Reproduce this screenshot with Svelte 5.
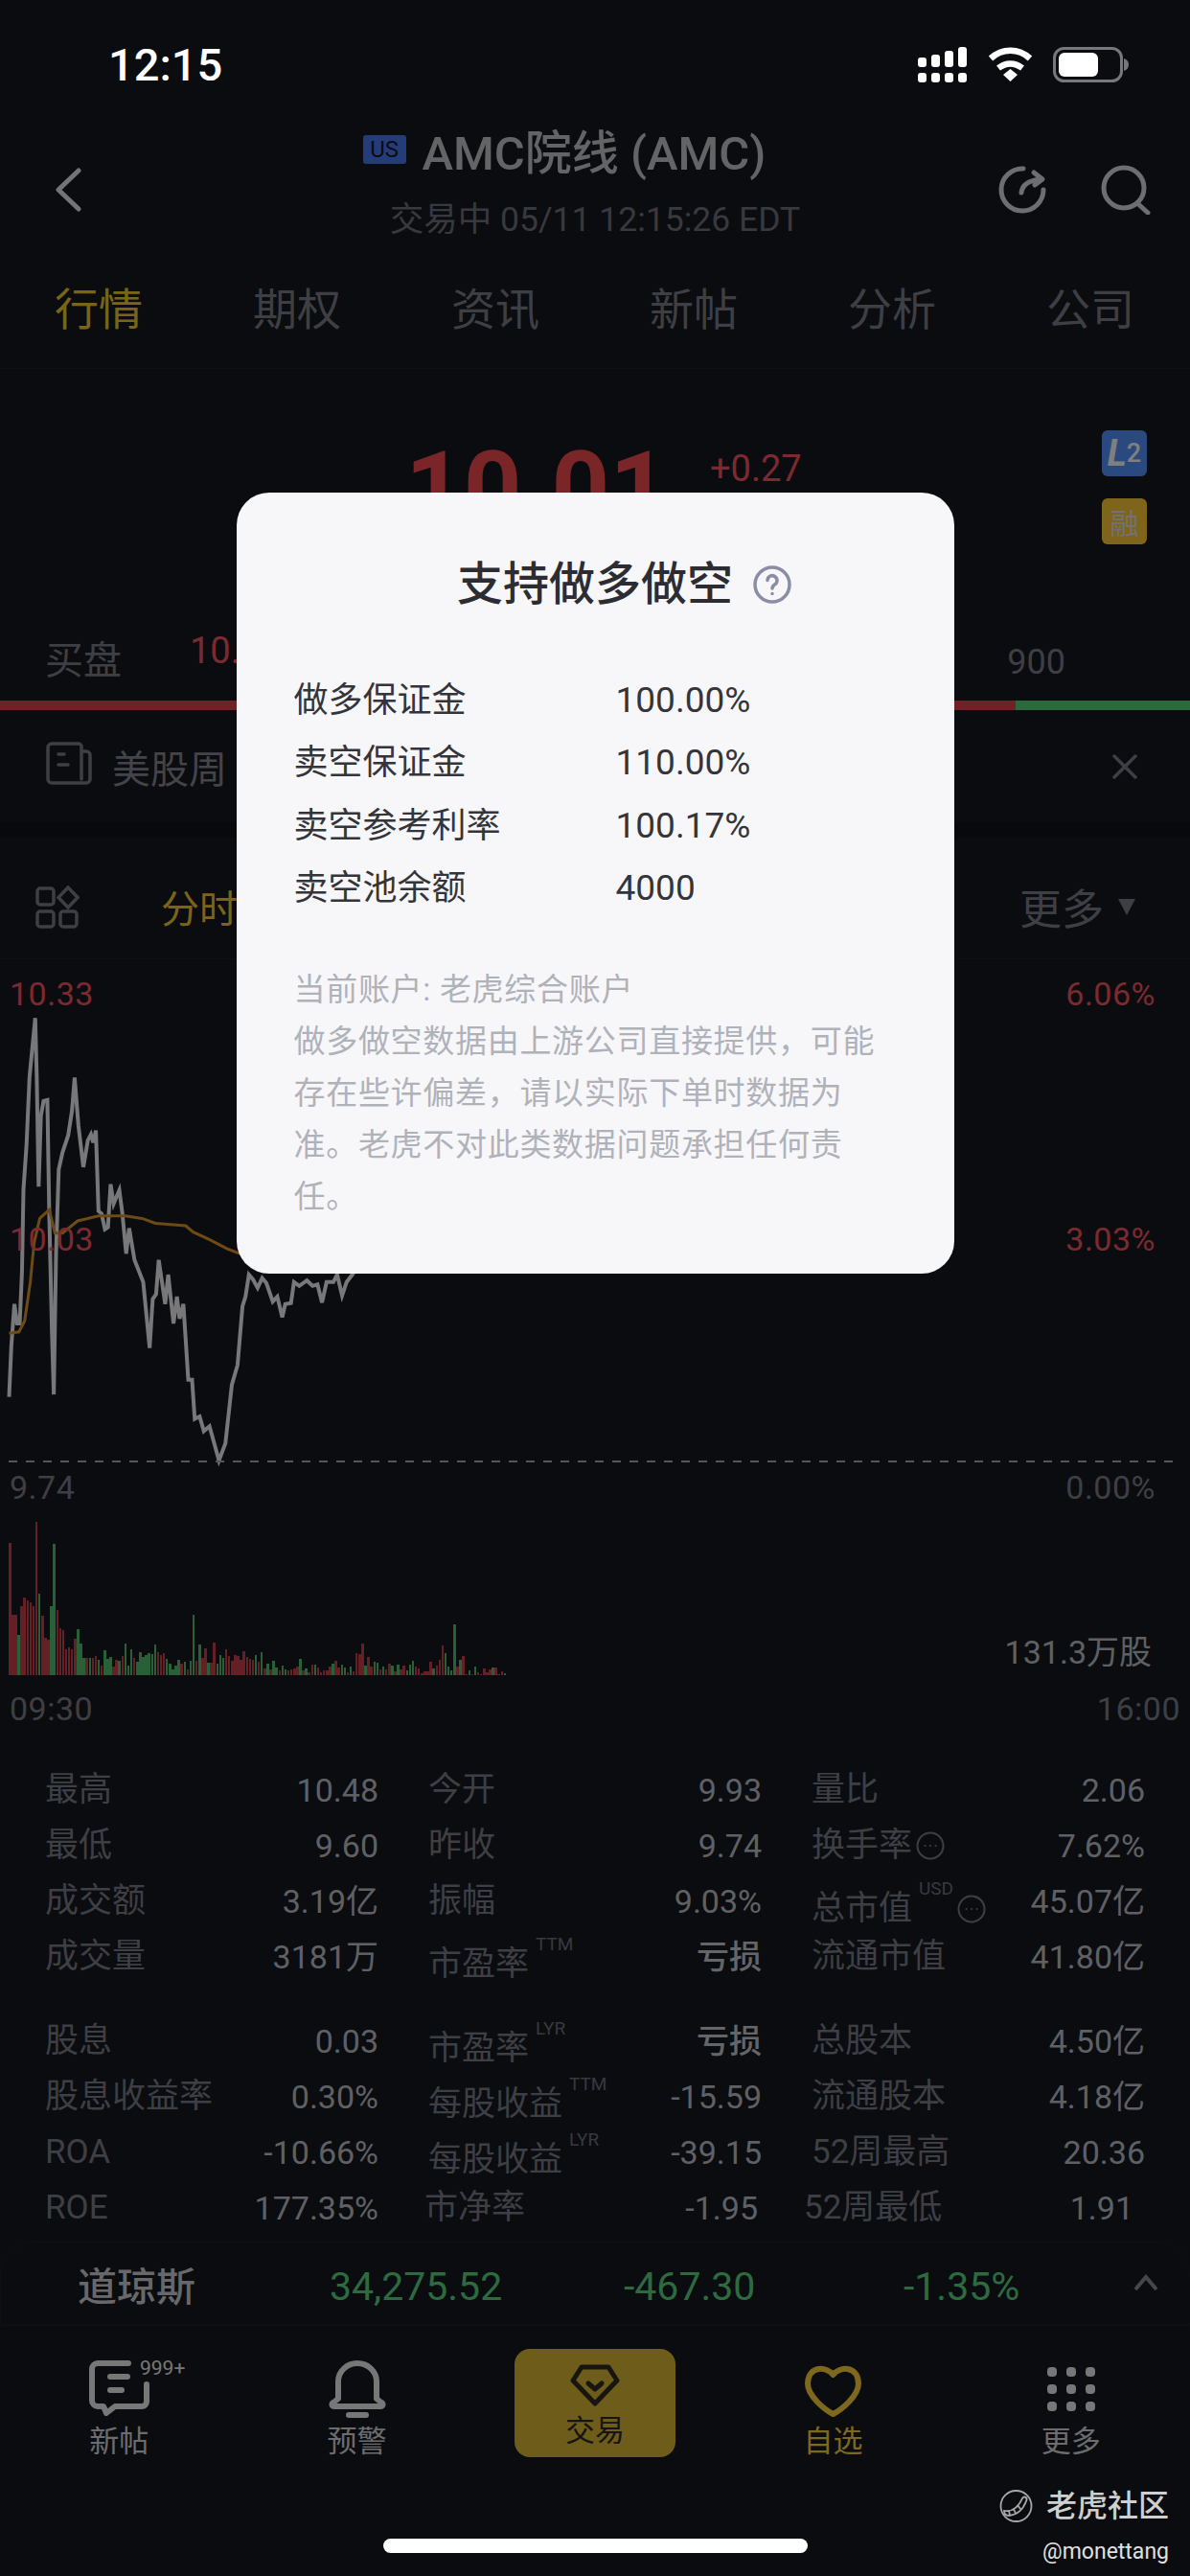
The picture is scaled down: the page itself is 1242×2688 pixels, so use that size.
<script>
  const tabs = ['行情', '期权', '资讯', '新帖', '分析', '公司'];

  // label, sup, info icon, value
  const statsTop = [
    ['最高', '', false, '10.48'], ['今开', '', false, '9.93'], ['量比', '', false, '2.06'],
    ['最低', '', false, '9.60'], ['昨收', '', false, '9.74'], ['换手率', '', true, '7.62%'],
    ['成交额', '', false, '3.19亿'], ['振幅', '', false, '9.03%'], ['总市值', 'USD', true, '45.07亿'],
    ['成交量', '', false, '3181万'], ['市盈率', 'TTM', false, '亏损'], ['流通市值', '', false, '41.80亿'],
  ];
  const statsBottom = [
    ['股息', '', false, '0.03'], ['市盈率', 'LYR', false, '亏损'], ['总股本', '', false, '4.50亿'],
    ['股息收益率', '', false, '0.30%'], ['每股收益', 'TTM', false, '-15.59'], ['流通股本', '', false, '4.18亿'],
    ['ROA', '', false, '-10.66%'], ['每股收益', 'LYR', false, '-39.15'], ['52周最高', '', false, '20.36'],
    ['ROE', '', false, '177.35%'], ['市净率', '', false, '-1.95'], ['52周最低', '', false, '1.91'],
  ];

  const marginRows = [
    ['做多保证金', '100.00%'],
    ['卖空保证金', '110.00%'],
    ['卖空参考利率', '100.17%'],
    ['卖空池余额', '4000'],
  ];
  const noteLines = [
    '当前账户: 老虎综合账户',
    '做多做空数据由上游公司直接提供，可能',
    '存在些许偏差，请以实际下单时数据为',
    '准。老虎不对此类数据问题承担任何责',
    '任。',
  ];

  // traced off the chart, in a 1568x1568 box stretched over 620x800
  const priceLine = '24,895 30,790 38,705 45,745 52,745 58,640 62,470 70,380 78,240 93,120 97,240 102,465 108,320 115,290 125,288 130,520 137,760 142,890 148,600 155,430 165,395 180,360 190,310 197,242 207,340 220,425 232,370 240,358 246,375 253,350 260,515 268,520 277,552 285,548 292,460 300,500 315,472 323,520 333,602 341,550 355,615 378,660 395,795 403,695 412,685 419,615 436,705 444,645 458,745 467,690 474,735 484,705 497,860 507,860 514,940 527,935 538,965 553,955 578,1025 595,990 612,870 627,830 640,710 648,690 657,645 668,655 680,672 692,652 703,662 720,700 732,690 745,732 753,705 768,703 776,660 790,668 810,657 825,668 838,665 850,702 862,660 880,660 890,645 903,688 915,660 930,645 960,610';
  const avgLine = '24,765 50,762 65,740 80,660 90,580 105,530 130,512 145,560 165,560 205,535 260,525 330,525 375,530 410,540 490,545 510,558 550,572 600,592 640,604';

  const volumeData = '138r 63r 63r 42g 72r 81r 78r 76r 72r 160r 85g 62r 39r 37r 72g 137g 68r 49r 47r 27r 29r 27r 38r 48g 33g 18g 18r 18g 18r 20r 16g 10r 26g 17g 19g 9r 16r 15g 20r 33g 10g 27g 18r 14g 24g 19g 21g 23g 22g 32g 24r 21r 23r 17g 12g 6g 10g 16g 12r 14g 6r 15g 63g 15r 32g 18r 28r 13g 13r 34r 12g 21g 18g 27r 20r 15r 21r 20r 16r 25r 19r 17r 16r 21g 14r 24g 7r 12g 6r 15g 8g 5r 10g 6g 5r 6r 7r 9r 17g 5r 7g 3r 11r 11g 8r 3r 5r 5r 9r 12g 15r 8r 11g 8g 3r 9g 4r 23r 22r 33r 10g 19r 9r 14g 13g 6r 9g 6r 12r 10g 4r 11g 6r 10r 5g 11g 15g 9r 7r 2r 4r 4r 14r 7g 10r 16r 31r 23g 9g 5g 53g 9r 16g 20r 1r 5g 1r 9g 3r 1r 7r 3r 6r 8g 8r 1r 4r 2g';
  const volumes = volumeData.split(' ').map((v) => ({ h: parseInt(v), up: v.endsWith('r') }));
</script>

{#snippet statGrid(rows, lastRowNudged)}
  <div class="stat-grid">
    {#each rows as [label, sup, info, value], i}
      <div class="stat" class:nudge-mid={lastRowNudged && i === 10} class:nudge-end={lastRowNudged && i === 11}>
        <span class="stat-label">{label}{#if sup}<sup>{sup}</sup>{/if}{#if info}
          <svg class="info" viewBox="0 0 30 30"><circle cx="15" cy="15" r="13.5" /><path d="M9.5 15h.1M15 15h.1M20.5 15h.1" /></svg>
        {/if}</span>
        <span class="stat-value" class:strong={value === '亏损'}>{value}</span>
      </div>
    {/each}
  </div>
{/snippet}

<div class="page">
  <div class="screen">
    <header class="nav">
      <svg class="back" viewBox="0 0 28 46"><path d="M25 3 4 23l21 20" /></svg>
      <div class="nav-title">
        <div class="title-row">
          <span class="market">US</span>
          <h1>AMC院线 (AMC)</h1>
        </div>
        <div class="trade-time">交易中 05/11 12:15:26 EDT</div>
      </div>
      <div class="nav-actions">
        <svg class="refresh" viewBox="0 0 50 50"><path d="M26 3A22 22 0 1 0 47 25M24 28c1-9 8-13 21-14M37 7l9 7-8 6" /></svg>
        <svg class="search" viewBox="0 0 52 52"><circle cx="24" cy="24" r="21" /><path d="m38 40 11 10" /></svg>
      </div>
    </header>

    <nav class="tabs">
      {#each tabs as tab, i}
        <span class:active={i === 0}>{tab}</span>
      {/each}
    </nav>

    <section class="quote">
      <div class="price-block">
        <span class="price">10.01</span>
        <span class="change">+0.27</span>
      </div>
      <div class="badges">
        <span class="badge l2"><i>L</i>2</span>
        <span class="badge margin">融</span>
      </div>
    </section>

    <section class="book">
      <div class="book-side"><span>买盘</span><span class="bid">10.01</span></div>
      <span class="ask-size">900</span>
    </section>
    <div class="ratio"><span class="ratio-red"></span><span class="ratio-green"></span></div>

    <section class="notice">
      <svg class="notice-icon" viewBox="0 0 50 47">
        <path d="M38 40V6a3 3 0 0 0-3-3H7a4 4 0 0 0-4 4v33a4 4 0 0 0 4 4h36a4 4 0 0 0 4-4V15a4 4 0 0 0-4-4h-5M14 14h6M14 25h10" />
      </svg>
      <span class="notice-text">美股周</span>
      <svg class="close" viewBox="0 0 26 26"><path d="m2 2 22 22M24 2 2 24" /></svg>
    </section>
    <div class="gap-band"></div>

    <section class="chart-bar">
      <svg class="grid-icon" viewBox="0 0 46 45">
        <rect x="2" y="3" width="17" height="17" rx="3" />
        <path d="m34 2 10 10.500-10 10.500-10-10.500z" />
        <rect x="2" y="27" width="17" height="16" rx="3" />
        <rect x="26" y="27" width="17" height="16" rx="3" />
      </svg>
      <span class="period">分时</span>
      <span class="more">更多</span>
      <svg class="caret" viewBox="0 0 18 17"><path d="M0 0h18L9 17z" /></svg>
    </section>

    <section class="chart">
      <svg class="plot" viewBox="0 0 1568 1568" preserveAspectRatio="none">
        <polyline class="line-price" points={priceLine} />
        <polyline class="line-avg" points={avgLine} />
      </svg>
      <div class="zero-line"></div>
      <span class="tick red left t1">10.33</span>
      <span class="tick red left t2">10.03</span>
      <span class="tick left t3">9.74</span>
      <span class="tick red right t1">6.06%</span>
      <span class="tick red right t2">3.03%</span>
      <span class="tick right t3">0.00%</span>
      <div class="volume">
        {#each volumes as bar}
          <span class:up={bar.up} style="height:{bar.h}px"></span>
        {/each}
      </div>
      <span class="vol-total">131.3万股</span>
      <span class="tick left t4">09:30</span>
      <span class="tick end t4">16:00</span>
    </section>

    <section class="stats">
      {@render statGrid(statsTop, false)}
      {@render statGrid(statsBottom, true)}
    </section>

    <section class="index">
      <span class="index-name">道琼斯</span>
      <span class="index-num">34,275.52</span>
      <span class="index-num">-467.30</span>
      <span class="index-num">-1.35%</span>
      <svg class="chevron" viewBox="0 0 26 18"><path d="m2 16 11-13 11 13" /></svg>
    </section>

    <footer class="tabbar">
      <div class="tabbar-item">
        <span class="posts-badge">999+</span>
        <svg class="tb-icon posts" viewBox="0 0 63 59">
          <path d="M41 4H9a6 6 0 0 0-6 6v33a6 6 0 0 0 6 6h6l3 7 9-7h28a5 5 0 0 0 5-5V26" />
          <path d="M22 18h18M22 32h12" />
        </svg>
        <span>新帖</span>
      </div>
      <div class="tabbar-item">
        <svg class="tb-icon bell" viewBox="0 0 60 60">
          <path d="M10 40V22a20 19 0 0 1 40 0v18l5 4a2 2 0 0 1-1 4H6a2 2 0 0 1-1-4z" />
          <path d="M21 57h18" />
        </svg>
        <span>预警</span>
      </div>
      <div class="tabbar-item">
        <div class="trade-btn">
          <svg class="diamond" viewBox="0 0 52 44">
            <path d="M12 3h28l9 14-23 24L3 17z" />
            <path d="m19 20 7 6 7-6" />
          </svg>
          <span>交易</span>
        </div>
      </div>
      <div class="tabbar-item gold">
        <svg class="tb-icon heart" viewBox="0 0 59 55">
          <path d="M29.500 11C24 3 4 0 3 20c0 13 17 27 26.500 32C39 47 56 33 56 20 55 0 35 3 29.500 11z" />
        </svg>
        <span>自选</span>
      </div>
      <div class="tabbar-item">
        <div class="dots">
          {#each Array(9) as _}<i></i>{/each}
        </div>
        <span>更多</span>
      </div>
    </footer>
  </div>

  <div class="scrim">
    <div class="dialog">
      <h2><span class="dialog-title">支持做多做空<svg class="help" viewBox="0 0 40 40"><circle cx="20" cy="20" r="18" /><path d="M15 15.500a5 5 0 1 1 7.500 4.500c-1.500 1-2.500 2-2.500 4M20 29.500v.1" /></svg></span></h2>
      <div class="rows">
        {#each marginRows as [label, value]}
          <div class="row"><span>{label}</span><span class="row-value">{value}</span></div>
        {/each}
      </div>
      <div class="note">
        {#each noteLines as line}<div>{line}</div>{/each}
      </div>
    </div>
  </div>

  <div class="statusbar">
    <span class="clock">12:15</span>
    <div class="status-icons">
      <svg class="signal" viewBox="0 0 52 37">
        <rect x="0" y="11" width="9" height="10" rx="3" /><rect x="14" y="8" width="9" height="13" rx="3" /><rect x="28" y="4" width="9" height="17" rx="3" /><rect x="42" y="0" width="9" height="21" rx="3" />
        <rect x="0" y="27" width="9" height="10" rx="3" /><rect x="14" y="27" width="9" height="10" rx="3" /><rect x="28" y="27" width="9" height="10" rx="3" /><rect x="42" y="27" width="9" height="10" rx="3" />
      </svg>
      <svg class="wifi" viewBox="0 0 47 36">
        <path class="wifi-arc" d="M3 12C15 1 32 1 44 12M11 22c8-6 17-6 25 0" />
        <path d="m16 29 7.500-6 7.500 6-7.500 7z" />
      </svg>
      <svg class="battery" viewBox="0 0 79 37">
        <rect class="battery-case" x="1.500" y="1.500" width="70" height="34" rx="10" />
        <rect x="6" y="6" width="41" height="25" rx="6" />
        <path class="battery-tip" d="M74 12c3 1 5 3 5 6.500S77 24 74 25z" />
      </svg>
    </div>
  </div>

  <div class="watermark">
    <div class="wm-brand">
      <svg class="wm-logo" viewBox="0 0 35 34">
        <circle cx="17.500" cy="17" r="16" />
        <path d="M5 22c7 1 14-2 19-13 2-3 6-1 4 3-3 8-9 14-18 15-3 0-5-2-5-5zM10 22l1 5M15 20l2 5M19 16l3 4" />
      </svg>
      <span>老虎社区</span>
    </div>
    <span class="wm-user">@monettang</span>
  </div>

  <div class="home-indicator"></div>
</div>

<style>
  :global(body) {
    background: #16181f;
  }

  .page {
    position: relative;
    width: 1242px;
    height: 2688px;
    overflow: hidden;
    background: #16181f;
    font-family: Roboto, "Noto Sans CJK SC", sans-serif;
    color: #7c7e88;
  }

  .screen {
    padding-top: 110px;
  }

  /* dimmed layer + the sheet on top of it */
  .scrim {
    position: absolute;
    inset: 0;
    background: rgba(0, 0, 0, 0.5);
    display: flex;
    justify-content: center;
    align-items: flex-start;
    padding-top: 514px;
    box-sizing: border-box;
  }

  .dialog {
    width: 749px;
    height: 815px;
    box-sizing: border-box;
    padding: 67px 60px 0;
    background: #f7f7fa;
    border-radius: 34px;
  }

  h2 {
    margin: 0 0 59px;
    text-align: center;
    font-size: 48px;
    line-height: 58px;
    font-weight: 500;
    color: #2b2d33;
  }

  .dialog-title {
    position: relative;
    display: inline-block;
  }

  .help {
    position: absolute;
    left: calc(100% + 21px);
    top: 9px;
    width: 40px;
    height: 40px;
    fill: none;
    stroke: #8b8da6;
    stroke-width: 3.500;
    stroke-linecap: round;
  }

  .row {
    display: grid;
    grid-template-columns: 336px 1fr;
    align-items: center;
    height: 65.500px;
    font-size: 36px;
    line-height: 48px;
    color: #34353a;
  }

  .row-value {
    font-size: 37px;
    font-weight: 400;
  }

  .note {
    margin-top: 46px;
    font-size: 33px;
    line-height: 54px;
    letter-spacing: 0.700px;
    color: #b0b2ba;
    white-space: nowrap;
  }

  /* header */
  .nav {
    display: grid;
    grid-template-columns: 1fr auto 1fr;
    align-items: center;
    height: 145px;
    padding: 0 41px 0 57px;
  }

  .back {
    width: 28px;
    height: 46px;
    margin-top: 30px;
    fill: none;
    stroke: #e8e8ec;
    stroke-width: 5;
    stroke-linecap: round;
    stroke-linejoin: round;
  }

  .nav-title {
    display: flex;
    flex-direction: column;
    align-items: center;
    gap: 16px;
    margin: 13px 16px 0 0;
  }

  .title-row {
    display: flex;
    align-items: center;
    gap: 17px;
    margin-right: 64px;
    height: 56px;
  }

  h1 {
    margin: 0;
    font-size: 49px;
    font-weight: 500;
    color: #c6c8cc;
    white-space: nowrap;
  }

  .market {
    width: 45px;
    height: 30px;
    line-height: 30px;
    text-align: center;
    background: #4a78f0;
    border-radius: 3px;
    font-size: 24px;
    color: #16181f;
  }

  .trade-time {
    font-size: 35.500px;
    color: #70727c;
    white-space: nowrap;
  }

  .nav-actions {
    display: flex;
    justify-content: flex-end;
    align-items: center;
    gap: 57px;
    margin-top: 30px;
  }

  .refresh,
  .search {
    fill: none;
    stroke: #dcdce0;
    stroke-width: 5;
    stroke-linecap: round;
    stroke-linejoin: round;
  }

  .refresh {
    width: 50px;
    height: 50px;
  }

  .search {
    width: 52px;
    height: 52px;
  }

  .tabs {
    display: flex;
    gap: 115px;
    height: 130px;
    padding-left: 57px;
    padding-top: 37px;
    box-sizing: border-box;
    border-bottom: 1px solid #1e2028;
    font-size: 46px;
    line-height: 62px;
    color: #7c7e88;
  }

  .tabs .active {
    color: #f4c830;
  }

  /* quote */
  .quote {
    display: flex;
    justify-content: space-between;
    height: 265px;
    box-sizing: border-box;
    padding: 64px 45px 0 423px;
  }

  .price-block {
    display: flex;
    align-items: flex-start;
    gap: 44px;
  }

  .price {
    font-size: 106px;
    line-height: 106px;
    font-weight: 700;
    color: #f44a50;
    margin-top: 8px;
  }

  .change {
    font-size: 38px;
    color: #f45460;
    line-height: 36px;
    margin-top: 22px;
  }

  .badges {
    display: flex;
    flex-direction: column;
    gap: 23px;
  }

  .badge {
    display: flex;
    align-items: center;
    justify-content: center;
    width: 47px;
    height: 48px;
    border-radius: 6px;
    color: #ffffff;
    font-size: 30px;
  }

  .l2 {
    background: #5494ff;
    font-weight: 500;
    font-size: 27px;
  }

  .l2 i {
    font-size: 38px;
    font-weight: 700;
  }

  .margin {
    background: #ffc838;
    color: #e4e4e4;
  }

  .book {
    display: flex;
    justify-content: space-between;
    align-items: center;
    height: 81px;
    padding: 0 130px 10px 47px;
    box-sizing: border-box;
    font-size: 40px;
  }

  .book-side {
    display: flex;
    gap: 71px;
  }

  .bid {
    color: #f45460;
    font-size: 38px;
  }

  .ask-size {
    font-size: 36px;
    margin-top: 10px;
  }

  .ratio {
    display: flex;
    height: 10px;
  }

  .ratio-red {
    width: 1060px;
    background: #dc4450;
  }

  .ratio-green {
    flex: 1;
    background: #54d478;
  }

  .notice {
    display: flex;
    align-items: center;
    height: 117px;
    padding: 0 55px 0 47px;
  }

  .notice-icon {
    width: 50px;
    height: 47px;
    fill: none;
    stroke: #7c7e88;
    stroke-width: 3.500;
    stroke-linecap: round;
    margin-top: -6px;
  }

  .notice-text {
    margin-left: 20px;
    font-size: 40px;
    flex: 1;
    color: #868892;
  }

  .close {
    width: 26px;
    height: 26px;
    fill: none;
    stroke: #7c7e88;
    stroke-width: 3.500;
    stroke-linecap: round;
  }

  .gap-band {
    height: 16px;
    background: #121318;
  }

  .chart-bar {
    display: flex;
    align-items: center;
    height: 126px;
    padding: 18px 57px 0 37px;
    box-sizing: border-box;
  }

  .grid-icon {
    width: 46px;
    height: 45px;
    fill: none;
    stroke: #7c7e88;
    stroke-width: 3.500;
  }

  .period {
    margin-left: 85px;
    flex: 1;
    font-size: 40px;
    color: #f4c830;
  }

  .more {
    font-size: 44px;
    color: #7c7e88;
  }

  .caret {
    width: 18px;
    height: 17px;
    margin-left: 15px;
    fill: #7c7e88;
  }

  /* chart is a free canvas, its labels sit over the plot */
  .chart {
    position: relative;
    height: 836px;
    border-top: 1px solid #1e2028;
    box-sizing: border-box;
  }

  .plot {
    position: absolute;
    left: 0;
    top: 0;
    width: 620px;
    height: 800px;
    fill: none;
  }

  .line-price {
    stroke: #f0f0f4;
    stroke-width: 4;
    vector-effect: non-scaling-stroke;
  }

  .line-avg {
    stroke: #dc9428;
    stroke-width: 3;
    vector-effect: non-scaling-stroke;
  }

  .zero-line {
    position: absolute;
    left: 9px;
    right: 12px;
    top: 523px;
    height: 2px;
    background: repeating-linear-gradient(90deg, #aaacb4 0 9px, transparent 9px 18px);
  }

  .tick {
    position: absolute;
    font-size: 34px;
    line-height: 40px;
    letter-spacing: 0.500px;
    color: #7c7e88;
  }

  .tick.red {
    color: #f45460;
  }

  .left {
    left: 10px;
  }

  .right {
    right: 36px;
  }

  .end {
    right: 10px;
  }

  .t1 {
    top: 16px;
  }

  .t2 {
    top: 272px;
  }

  .t3 {
    top: 531px;
  }

  .t4 {
    top: 762px;
  }

  .volume {
    position: absolute;
    left: 9px;
    top: 586px;
    width: 519px;
    height: 161px;
    display: flex;
    align-items: flex-end;
    gap: 0.600px;
  }

  .volume span {
    flex: 1;
    background: #52c070;
  }

  .volume span.up {
    background: #c84048;
  }

  .vol-total {
    position: absolute;
    right: 40px;
    top: 702px;
    font-size: 34px;
    line-height: 42px;
    color: #bec0c8;
  }

  /* stats */
  .stats {
    display: flex;
    flex-direction: column;
    gap: 30px;
    padding: 3px 46px 0 47px;
  }

  .stat-grid {
    display: grid;
    grid-template-columns: repeat(3, 348px);
    column-gap: 52px;
    grid-auto-rows: 58px;
  }

  .stat {
    display: flex;
    justify-content: space-between;
    align-items: center;
    font-size: 34px;
    line-height: 44px;
  }

  .nudge-mid {
    margin: 0 4px 0 -4px;
  }

  .nudge-end {
    margin: 0 12px 0 -8px;
  }

  .stat-label {
    display: flex;
    align-items: center;
    font-size: 35px;
    color: #7c7e88;
    white-space: nowrap;
  }

  .stat-label sup {
    align-self: flex-start;
    margin: -9px 0 0 7px;
    font-size: 19px;
    line-height: 20px;
    color: #70727c;
    vertical-align: baseline;
  }

  .stat:has(sup) .stat-label {
    margin-top: 16px;
  }

  .info {
    width: 30px;
    height: 30px;
    margin-left: 4px;
    fill: none;
    stroke: #7c7e88;
    stroke-width: 2;
    stroke-linecap: round;
  }

  .stat-value {
    color: #bec0c8;
    white-space: nowrap;
  }

  .strong {
    font-weight: 500;
  }

  .stat:has(.strong) .stat-value {
    color: #cacbd0;
  }

  /* index strip */
  .index {
    display: grid;
    grid-template-columns: 263px 307px 292px 235px 1fr;
    align-items: center;
    height: 88px;
    margin-top: 6px;
    padding: 0 32px 0 80px;
    box-sizing: border-box;
    border: 1px solid #1e2028;
    border-bottom-color: #1e2028;
    border-radius: 34px 34px 0 0;
    font-size: 41px;
  }

  .index-name {
    font-weight: 500;
    color: #d0d0d4;
  }

  .index-num {
    color: #5ad480;
    margin-top: 6px;
  }

  .chevron {
    width: 26px;
    height: 18px;
    justify-self: end;
    fill: none;
    stroke: #8a8c94;
    stroke-width: 4;
    margin-top: -2px;
  }

  /* bottom tabs */
  .tabbar {
    display: grid;
    grid-template-columns: repeat(5, 1fr);
    padding-top: 24px;
  }

  .tabbar-item {
    position: relative;
    display: flex;
    flex-direction: column;
    align-items: center;
    height: 115px;
    font-size: 31px;
    line-height: 34px;
    color: #d8d8dc;
  }

  .tabbar-item > span:last-child {
    margin-top: auto;
    margin-bottom: 1px;
  }

  .tabbar-item.gold {
    color: #f8d040;
  }

  .tb-icon {
    fill: none;
    stroke: #eeeeee;
    stroke-width: 6;
    stroke-linecap: round;
    stroke-linejoin: round;
  }

  .posts {
    width: 63px;
    height: 59px;
    margin-top: 11px;
  }

  .bell {
    width: 60px;
    height: 60px;
    margin-top: 12px;
  }

  .heart {
    width: 59px;
    height: 55px;
    margin-top: 16px;
    stroke: #fad03c;
  }

  .posts-badge {
    position: absolute;
    left: 146px;
    top: 8px;
    font-size: 21px;
    line-height: 24px;
    color: #eeeeee;
  }

  .trade-btn {
    display: flex;
    flex-direction: column;
    align-items: center;
    width: 168px;
    height: 113px;
    box-sizing: border-box;
    padding-top: 16px;
    border-radius: 16px;
    background: #dcb836;
    color: #2c2a20;
  }

  .diamond {
    width: 52px;
    height: 44px;
    fill: none;
    stroke: #2c2a20;
    stroke-width: 5;
    stroke-linecap: round;
    stroke-linejoin: round;
  }

  .trade-btn span {
    margin-top: 9px;
  }

  .dots {
    display: grid;
    grid-template-columns: repeat(3, 10px);
    grid-auto-rows: 10px;
    gap: 8px 10px;
    margin-top: 19px;
  }

  .dots i {
    border-radius: 4px;
    background: #eeeeee;
  }

  /* overlays above the scrim */
  .statusbar {
    position: absolute;
    left: 0;
    right: 0;
    top: 0;
    display: flex;
    justify-content: space-between;
    align-items: flex-start;
    padding: 37px 64px 0 113px;
    color: #fff;
  }

  .clock {
    font-size: 47px;
    line-height: 62px;
    font-weight: 500;
  }

  .status-icons {
    display: flex;
    gap: 21px;
    margin-top: 12px;
    fill: #fff;
  }

  .signal {
    width: 52px;
    height: 37px;
  }

  .wifi {
    width: 47px;
    height: 36px;
  }

  .wifi-arc {
    fill: none;
    stroke: #fff;
    stroke-width: 6.500;
  }

  .battery {
    width: 79px;
    height: 37px;
  }

  .battery-case {
    fill: none;
    stroke: #78787c;
    stroke-width: 3;
  }

  .battery-tip {
    fill: #78787c;
  }

  .watermark {
    position: absolute;
    right: 22px;
    top: 2596px;
    display: flex;
    flex-direction: column;
    align-items: flex-end;
    gap: 14px;
  }

  .wm-brand {
    display: flex;
    align-items: center;
    gap: 14px;
    font-size: 32px;
    line-height: 38px;
    font-weight: 500;
    color: #cfcfcf;
  }

  .wm-logo {
    width: 35px;
    height: 34px;
    fill: none;
    stroke: #a8a8a8;
    stroke-width: 1.800;
  }

  .wm-user {
    font-size: 23px;
    line-height: 30px;
    color: #e0e0e0;
  }

  .home-indicator {
    position: absolute;
    left: 400px;
    top: 2649px;
    width: 443px;
    height: 15px;
    border-radius: 8px;
    background: #fff;
  }
</style>
